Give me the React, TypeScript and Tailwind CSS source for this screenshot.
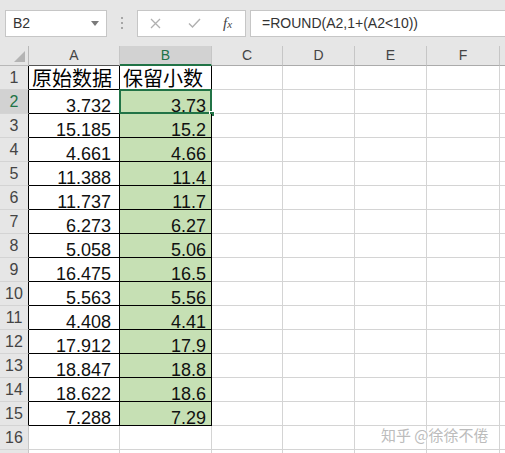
import React from 'react';

const original = ['3.732', '15.185', '4.661', '11.388', '11.737', '6.273', '5.058', '16.475', '5.563', '4.408', '17.912', '18.847', '18.622', '7.288'];
const rounded = ['3.73', '15.2', '4.66', '11.4', '11.7', '6.27', '5.06', '16.5', '5.56', '4.41', '17.9', '18.8', '18.6', '7.29'];

const FONT = { fontFamily: '"Liberation Sans", Arial, sans-serif' };
const CJK = { fontFamily: '"Noto Sans CJK SC", "Liberation Sans", sans-serif' };

// widths of the empty columns C..F
const emptyCols = ['w-[71px]', 'w-[72px]', 'w-[72px]', 'w-[73px]'];

const RowHeader = ({ n, selected, boxed }: { n?: number; selected?: boolean; boxed?: boolean }) => (
  <div
    className={`w-[29px] shrink-0 flex items-center justify-center border-b border-r text-[16px] ${
      boxed ? 'border-r-black' : 'border-r-[#c6c6c6]'
    } border-b-[#d4d4d4] ${selected ? 'bg-[#d2d2d2] text-[#217346]' : 'bg-[#e6e6e6] text-[#444]'}`}
    style={FONT}
  >
    {n}
  </div>
);

const EmptyCells = () => (
  <>
    {emptyCols.map((w, i) => (
      <div key={i} className={`${w} shrink-0 border-r border-b border-[#d4d4d4]`} />
    ))}
    <div className="flex-1 border-b border-[#d4d4d4]" />
  </>
);

export default function App() {
  return (
    <div className="w-[505px] h-[453px] overflow-hidden bg-white relative select-none" style={FONT}>
      {/* ── Formula bar ── */}
      <div className="h-[46px] bg-[#e6e6e6] flex items-center pl-[5px] gap-0">
        <div className="w-[102px] h-[27px] bg-white border border-[#c6c6c6] flex items-center justify-between pl-[7px] pr-[7px]">
          <span className="text-[14px] text-[#333]">B2</span>
          <svg width="8" height="5" viewBox="0 0 8 5">
            <path d="M0 0h8L4 5z" fill="#7a7a7a" />
          </svg>
        </div>
        <div className="w-[30px] flex flex-col items-center gap-[3px]">
          <span className="w-[2px] h-[2px] bg-[#a6a6a6]" />
          <span className="w-[2px] h-[2px] bg-[#a6a6a6]" />
          <span className="w-[2px] h-[2px] bg-[#a6a6a6]" />
        </div>
        <div className="w-[109px] h-[27px] bg-white border border-[#c6c6c6] flex items-center pl-[12px]">
          <svg width="11" height="11" viewBox="0 0 11 11" className="mr-[27px]">
            <path d="M1 1l9 9M10 1l-9 9" stroke="#b0b0b0" strokeWidth="1.3" fill="none" />
          </svg>
          <svg width="13" height="10" viewBox="0 0 13 10" className="mr-[22px]">
            <path d="M1 5.5l3.5 3.5L12 1" stroke="#b0b0b0" strokeWidth="1.4" fill="none" />
          </svg>
          <span
            className="text-[15px] italic text-[#444] leading-none"
            style={{ fontFamily: '"Liberation Serif", "Times New Roman", serif' }}
          >
            f<span className="text-[11px]">x</span>
          </span>
        </div>
        <div className="ml-[4px] flex-1 h-[27px] bg-white border border-[#c6c6c6] border-r-0 flex items-center pl-[11px]">
          <span className="text-[14px] text-[#333]">=ROUND(A2,1+(A2&lt;10))</span>
        </div>
      </div>

      {/* ── Column headers ── */}
      <div className="h-[20px] flex bg-[#e6e6e6] text-[14px] text-[#444]">
        <div className="w-[29px] shrink-0 border-r border-b border-[#b8b8b8] flex items-end justify-end pr-[3px] pb-[3px]">
          <svg width="11" height="11" viewBox="0 0 11 11">
            <path d="M11 0v11H0z" fill="#b4b4b4" />
          </svg>
        </div>
        <div className="w-[91px] shrink-0 border-r border-r-[#c6c6c6] border-b border-b-[#555] flex items-center justify-center">
          A
        </div>
        <div className="w-[92px] shrink-0 bg-[#d2d2d2] text-[#217346] border-r border-r-[#c6c6c6] border-b-2 border-b-[#217346] flex items-center justify-center">
          B
        </div>
        {['C', 'D', 'E', 'F'].map((c, i) => (
          <div
            key={c}
            className={`${emptyCols[i]} shrink-0 border-r border-r-[#c6c6c6] border-b border-b-[#ababab] flex items-center justify-center`}
          >
            {c}
          </div>
        ))}
        <div className="flex-1 border-b border-b-[#ababab]" />
      </div>

      {/* ── Row 1: headings ── */}
      <div className="h-[24px] flex">
        <RowHeader n={1} boxed />
        <div className="w-[91px] shrink-0 border-r border-b border-black flex items-end pl-[3px] pb-[1px] text-[20px] leading-[20px] text-black" style={CJK}>
          原始数据
        </div>
        <div className="w-[92px] shrink-0 border-r border-b border-black flex items-end pl-[3px] pb-[1px] text-[20px] leading-[20px] text-black" style={CJK}>
          保留小数
        </div>
        <EmptyCells />
      </div>

      {/* ── Data rows ── */}
      {original.map((v, i) => (
        <div key={v} className="h-[24px] flex">
          <RowHeader n={i + 2} selected={i === 0} boxed />
          <div className="w-[91px] shrink-0 border-r border-b border-black flex items-end justify-end pr-[8px] text-[18px] leading-[14px] text-[#111]">
            {v}
          </div>
          <div className="w-[92px] shrink-0 relative bg-[#c6e0b4] border-r border-b border-black flex items-end justify-end pr-[5px] text-[18px] leading-[14px] text-[#111]">
            {rounded[i]}
            {i === 0 && (
              <>
                <div className="absolute -left-[1px] -top-[1px] -right-[1px] -bottom-[1px] border-2 border-[#217346] pointer-events-none" />
                <div className="absolute -right-[4px] -bottom-[4px] w-[6px] h-[6px] bg-[#217346] border border-white" />
              </>
            )}
          </div>
          <EmptyCells />
        </div>
      ))}

      {/* ── Empty rows ── */}
      {[16, 0].map((n) => (
        <div key={n} className="h-[24px] flex">
          <RowHeader n={n || undefined} />
          <div className="w-[91px] shrink-0 border-r border-b border-[#d4d4d4]" />
          <div className="w-[92px] shrink-0 border-r border-b border-[#d4d4d4]" />
          <EmptyCells />
        </div>
      ))}

      {/* watermark */}
      <div
        className="absolute left-[381px] top-[424px] text-[15px] text-[#bcbcbc]"
        style={{ ...CJK, textShadow: '0 0 2px #fff, 0 0 2px #fff' }}
      >
        知乎 @徐徐不倦
      </div>
    </div>
  );
}
